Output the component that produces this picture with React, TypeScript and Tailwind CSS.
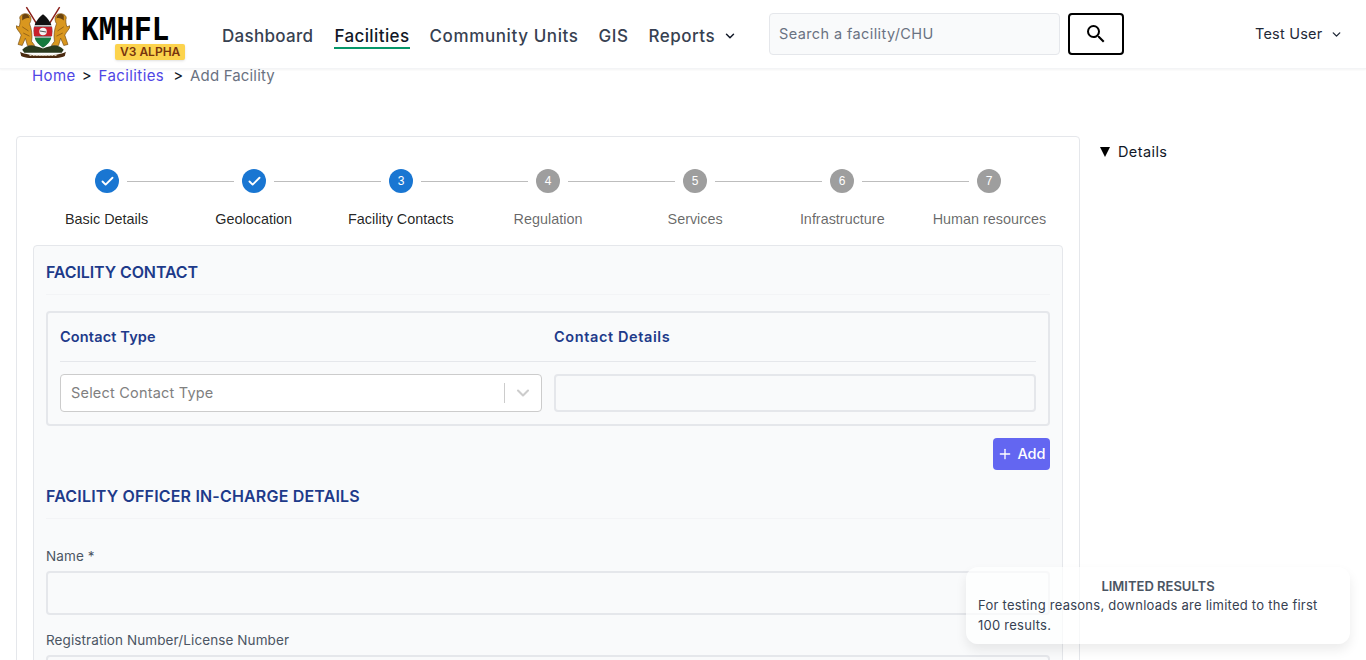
import { Check, ChevronDown, Plus } from "lucide-react";

const steps = [
  { label: "Basic Details", done: true, active: true },
  { label: "Geolocation", done: true, active: true },
  { label: "Facility Contacts", done: false, active: true },
  { label: "Regulation", done: false, active: false },
  { label: "Services", done: false, active: false },
  { label: "Infrastructure", done: false, active: false },
  { label: "Human resources", done: false, active: false },
];

function Logo() {
  return (
    <svg width="54" height="52" viewBox="2 0 52 50" className="mb-[5px] shrink-0">
      {/* spears */}
      <path d="M12 1 L28 27 M44 1 L28 27" stroke="#8a1f1a" strokeWidth="1.4" />
      {/* lions */}
      <path d="M6 13 C4 9 10 6 14 8 C17 10 17 14 15 17 C17 22 18 28 17 34 L20 38 L13 38 L11 31 L8 38 L4 37 L7 28 C5 24 2 22 2 19 L5 20 C6 17 6 15 6 13 Z" fill="#d9971f" stroke="#6b4410" strokeWidth="0.6" />
      <path d="M50 13 C52 9 46 6 42 8 C39 10 39 14 41 17 C39 22 38 28 39 34 L36 38 L43 38 L45 31 L48 38 L52 37 L49 28 C51 24 54 22 54 19 L51 20 C50 17 50 15 50 13 Z" fill="#d9971f" stroke="#6b4410" strokeWidth="0.6" />
      <path d="M8 9 C11 6 15 8 15 12 C13 11 10 12 8 14 Z" fill="#6b4410" />
      <path d="M48 9 C45 6 41 8 41 12 C43 11 46 12 48 14 Z" fill="#6b4410" />
      <path d="M8 20 L14 24 M9 26 L15 29 M48 20 L42 24 M47 26 L41 29" stroke="#8a5a14" strokeWidth="0.8" />
      {/* shield */}
      <path d="M28 8 C33 12 37 17 37 24 C37 31 33 36 28 40 C23 36 19 31 19 24 C19 17 23 12 28 8 Z" fill="#111" />
      <path d="M19.2 20 H36.8 V29 H19.2 Z" fill="#c8202c" />
      <path d="M19.2 19 H36.8 M19.2 30 H36.8" stroke="#fff" strokeWidth="1.2" />
      <path d="M20 30.6 H36 C35 34.5 32 37.6 28 40 C24 37.6 21 34.5 20 30.6 Z" fill="#167a3e" />
      <circle cx="28" cy="24.5" r="3.6" fill="#f4f4f4" />
      <path d="M25 24 L31 25" stroke="#555" strokeWidth="1" />
      {/* mount and ribbon */}
      <path d="M8 42 C14 36 20 38 28 41 C36 38 42 36 48 42 L46 45 H10 Z" fill="#2b3a1e" />
      <path d="M6 44 C14 49 42 49 50 44 L49 48 C40 52 16 52 7 48 Z" fill="#4a2a10" />
      <path d="M15 47.5 H41" stroke="#d8cdb8" strokeWidth="1" strokeDasharray="2 1" />
    </svg>
  );
}

function StepCircle({ n, done, active }: { n: number; done: boolean; active: boolean }) {
  return (
    <div className={`flex h-6 w-6 shrink-0 items-center justify-center rounded-full text-xs text-white ${active ? "bg-[#1976d2]" : "bg-[#9e9e9e]"}`}>
      {done ? <Check size={15} strokeWidth={3} /> : n}
    </div>
  );
}

export default function App() {
  return (
    <div className="relative h-[660px] overflow-hidden bg-white font-['Inter',sans-serif] text-[#111827]">
      {/* Top nav */}
      <header className="flex h-[69px] items-center border-b border-gray-100 bg-white pl-4 shadow-[0_1px_2px_rgba(0,0,0,0.05)]">
        <div className="flex w-[206px] shrink-0 items-center">
          <Logo />
          <div className="relative ml-[11px] h-[52px] w-[105px]">
            <span className="absolute left-0 top-[12px] scale-y-[1.18] font-['Liberation_Mono',monospace] text-[29.5px] font-bold leading-[22px] text-black">KMHFL</span>
            <span className="absolute left-[34px] top-[36px] whitespace-nowrap rounded-[2px] bg-[#fcd34d] px-[5px] text-[12px] font-semibold leading-[16px] text-[#78350f] shadow-sm">V3 ALPHA</span>
          </div>
        </div>
        <nav className="flex w-[527px] items-start gap-5 pt-[5px] text-[17px] font-medium leading-[22px] tracking-[0.5px] text-[#374151]">
          <a className="mr-px border-b-2 border-transparent tracking-[0.3px]">Dashboard</a>
          <a className="border-b-2 border-[#059669] tracking-[0.4px] text-[#111827]">Facilities</a>
          <a className="border-b-2 border-transparent tracking-[0.6px]">Community Units</a>
          <a className="border-b-2 border-transparent">GIS</a>
          <a className="flex items-center gap-2 border-b-2 border-transparent">
            Reports
            <ChevronDown size={14} strokeWidth={2.5} className="text-[#111827]" />
          </a>
        </nav>
        <div className="ml-5 flex items-center gap-2">
          <div className="flex h-[42px] w-[291px] items-center rounded border border-gray-200 bg-[#f9fafb] px-[9px] text-[14.5px] tracking-[0.4px] text-gray-500">
            Search a facility/CHU
          </div>
          <button className="flex h-[42px] w-[56px] items-center justify-center rounded border-2 border-black bg-white">
            <svg width="24" height="24" viewBox="0 0 24 24" fill="#000">
              <path d="M15.5 14h-.79l-.28-.27A6.47 6.47 0 0016 9.5 6.5 6.5 0 109.5 16c1.61 0 3.09-.59 4.23-1.57l.27.28v.79l5 4.99L20.49 19l-4.99-5zm-6 0C7.01 14 5 11.99 5 9.5S7.01 5 9.5 5 14 7.01 14 9.5 11.99 14 9.5 14z" />
            </svg>
          </button>
        </div>
        <div className="ml-[131px] flex items-center gap-2 text-[14.5px] tracking-[0.2px] text-[#1f2937]">
          Test User
          <ChevronDown size={13} strokeWidth={2.5} />
        </div>
      </header>

      {/* Breadcrumb */}
      <div className="flex h-[14px] items-center gap-[6px] pl-8 text-[15px] tracking-[0.4px]">
        <span className="text-[#4f46e5]">Home</span>
        <span className="mr-px tracking-normal">&gt;</span>
        <span className="mr-[3px] text-[#4f46e5]">Facilities</span>
        <span className="mr-px tracking-normal">&gt;</span>
        <span className="tracking-[0.15px] text-gray-500">Add Facility</span>
      </div>

      <div className="flex items-start pl-4 pt-[53px]">
        {/* Form card */}
        <main className="w-[1064px] shrink-0 rounded border border-gray-200 bg-white px-4 pt-[32px]">
          <div className="flex items-center px-[62px] font-['Liberation_Sans',sans-serif]">
            {steps.map((s, i) => (
              <div key={s.label} className={`flex items-center ${i < steps.length - 1 ? "flex-1" : ""}`}>
                <StepCircle n={i + 1} done={s.done} active={s.active} />
                {i < steps.length - 1 && <div className="mx-2 h-px flex-1 bg-[#bdbdbd]" />}
              </div>
            ))}
          </div>
          <div className="mt-[16px] grid grid-cols-7 text-center font-['Liberation_Sans',sans-serif] text-[14.4px] leading-[20px]">
            {steps.map((s) => (
              <div key={s.label} className={s.active ? "text-[rgba(0,0,0,0.87)]" : "text-[rgba(0,0,0,0.6)]"}>
                {s.label}
              </div>
            ))}
          </div>

          <section className="mt-4 rounded border border-gray-200 bg-[#f9fafb] px-[12px] pt-[15px]">
            <h2 className="border-b border-gray-100 pb-[11px] text-[16px] font-semibold leading-[22px] tracking-[-0.1px] text-[#1e3a8a]">FACILITY CONTACT</h2>

            <div className="mt-4 rounded border-2 border-gray-200 px-3 pb-3">
              <div className="grid grid-cols-2 gap-3 border-b border-gray-200 py-[14px]">
                <div className="text-[14.5px] font-semibold leading-[20px] tracking-[0.15px] text-[#1e3a8a]">Contact Type</div>
                <div className="text-[14.5px] font-semibold leading-[20px] tracking-[0.6px] text-[#1e3a8a]">Contact Details</div>
              </div>
              <div className="mt-3 grid grid-cols-2 gap-3">
                <div className="flex h-[38px] items-center rounded border border-[#cccccc] bg-white pl-[10px] text-[14.5px] tracking-[0.2px] text-[#808080]">
                  <span className="flex-1">Select Contact Type</span>
                  <span className="h-5 w-px bg-[#cccccc]" />
                  <span className="flex w-[36px] justify-center text-[#cccccc]">
                    <ChevronDown size={20} strokeWidth={2.5} />
                  </span>
                </div>
                <div className="h-[38px] rounded border-2 border-gray-200 bg-[#f9fafb]" />
              </div>
            </div>

            <div className="mt-3 flex justify-end">
              <button className="flex h-8 w-[57px] items-center justify-center gap-1 rounded bg-[#6366f1] text-[14.5px] font-medium text-white">
                <Plus size={16} strokeWidth={2} />
                Add
              </button>
            </div>

            <h2 className="mt-[15px] border-b border-gray-100 pb-[11px] text-[16px] font-semibold leading-[22px] tracking-[0.18px] text-[#1e3a8a]">FACILITY OFFICER IN-CHARGE DETAILS</h2>

            <label className="mt-[27px] block text-[13.5px] leading-[20px] tracking-[0.1px] text-[#4b5563]">Name *</label>
            <div className="mt-[5px] h-[44px] rounded border-2 border-gray-200 bg-[#f9fafb]" />
            <label className="mt-[15px] block text-[13.5px] leading-[20px] tracking-[0.1px] text-[#4b5563]">Registration Number/License Number</label>
            <div className="mt-[5px] h-[44px] rounded border-2 border-gray-200 bg-[#f9fafb]" />
          </section>
        </main>

        {/* Details toggle */}
        <div className="ml-5 mt-[6px] flex items-center gap-2 text-[14.5px] leading-[20px] tracking-[0.4px] text-[#111827]">
          <span className="h-0 w-0 border-x-[5.5px] border-t-[10px] border-x-transparent border-t-black" />
          Details
        </div>
      </div>

      {/* Limited results toast */}
      <div className="absolute bottom-4 right-4 w-[384px] rounded-xl bg-white/70 px-3 pb-[9px] pt-[10px] shadow-[0_6px_12px_rgba(0,0,0,0.08)]">
        <h5 className="text-center text-[13px] font-semibold leading-[18px] text-[#4b5563]">LIMITED RESULTS</h5>
        <p className="text-[13px] leading-[20px] tracking-[0.25px] text-[#374151]">For testing reasons, downloads are limited to the first 100 results.</p>
      </div>
    </div>
  );
}
